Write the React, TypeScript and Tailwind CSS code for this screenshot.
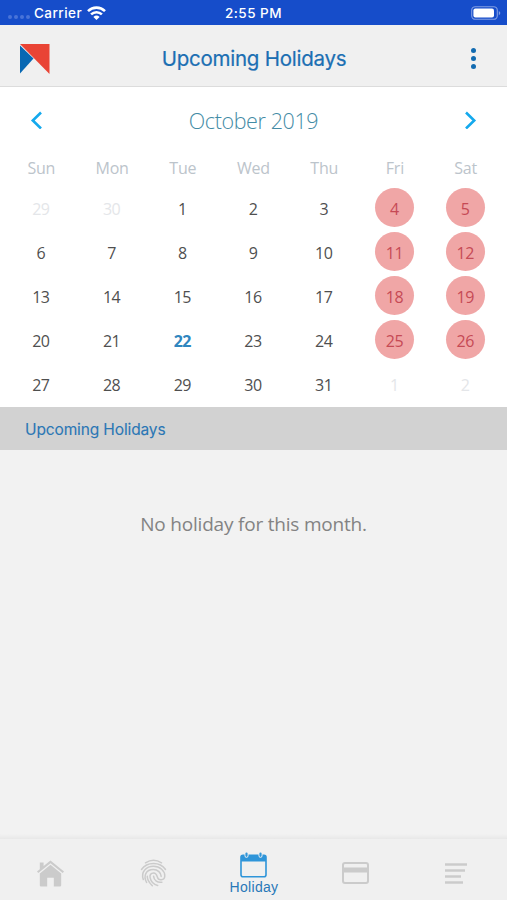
import React from "react";

const WEEKDAYS = ["Sun", "Mon", "Tue", "Wed", "Thu", "Fri", "Sat"];

type Day = { date: number; kind: "normal" | "outside" | "today" | "weekend" };

const TODAY = 22;

// October 2019 starts on a Tuesday, so the grid begins on September 29
const DAYS: Day[] = Array.from({ length: 35 }, (_, i) => {
  if (i < 2) return { date: 29 + i, kind: "outside" };
  const date = i - 1;
  if (date > 31) return { date: date - 31, kind: "outside" };
  if (date === TODAY) return { date, kind: "today" };
  return { date, kind: i % 7 >= 5 ? "weekend" : "normal" };
});

const dayStyles: Record<Day["kind"], string> = {
  normal: "text-[#4f4f4f]",
  outside: "text-[#e4e6e9]",
  today: "font-bold text-[#2f86bf]",
  weekend: "bg-[#f0a6a6] text-[#c64a55]",
};

const StatusBar: React.FC = () => (
  <div className="grid h-[25px] shrink-0 grid-cols-3 items-center bg-[#164dca] pt-px font-['Inter',sans-serif] text-[13.5px] font-medium text-white">
    <div className="flex items-center pl-2">
      <div className="flex gap-[2.5px] pt-[8px]">
        {[0, 1, 2, 3].map((dot) => (
          <span key={dot} className="size-[3.5px] rounded-full bg-[#4973d8]" />
        ))}
      </div>
      <span className="ml-[4.5px] w-[49px] whitespace-nowrap tracking-[0.45px]">Carrier</span>
      <svg className="ml-[4px] h-[14px] w-[19px]" viewBox="0 0 19 14" fill="none" stroke="white" strokeWidth="2.6">
        <path d="M1 5.1a12.2 12.2 0 0 1 17 0" />
        <path d="M4.1 8.4a7.8 7.8 0 0 1 10.8 0" />
        <path d="M9.5 14 6.4 10.9a4.5 4.5 0 0 1 6.2 0z" fill="white" stroke="none" />
      </svg>
    </div>
    <span className="text-center tracking-[0.5px]">2:55 PM</span>
    <svg className="mr-[5px] h-[14px] w-[31px] justify-self-end" viewBox="0 0 31 14" fill="none">
      <rect x="0.7" y="0.7" width="25.6" height="12.6" rx="3.6" stroke="#829ee3" strokeWidth="1.1" />
      <rect x="2.4" y="2.4" width="20.6" height="9.2" rx="2" fill="white" />
      <path d="M27.8 5v4.2c2-.8 2-3.4 0-4.2z" fill="#829ee3" />
    </svg>
  </div>
);

const Header: React.FC = () => (
  <header className="grid h-[62px] shrink-0 grid-cols-[1fr_auto_1fr] items-center border-b border-[#dcdcdc] bg-[#f0f0f0] px-[30px]">
    <svg className="mt-[7px] -ml-[11px] h-8 w-8" viewBox="0 0 32 32">
      <path d="M1 1h29.5v30z" fill="#e94435" />
      <path d="M1 2.5 14.5 15.5 1 30.5z" fill="#0868b3" />
    </svg>
    <h1 className="pt-[7px] pl-px font-['Inter',sans-serif] text-[20.5px] font-normal tracking-[-0.25px] text-[#1c6fb3] [-webkit-text-stroke:0.2px_#1c6fb3]">
      Upcoming Holidays
    </h1>
    <div className="flex w-[8px] flex-col items-center gap-[2.6px] justify-self-end pt-[6px]">
      <span className="size-[5px] rounded-full bg-[#126bb1]" />
      <span className="size-[5px] rounded-full bg-[#126bb1]" />
      <span className="size-[5px] rounded-full bg-[#126bb1]" />
    </div>
  </header>
);

const Calendar: React.FC = () => (
  <section className="h-[320px] shrink-0 bg-white px-[6px] font-['Open_Sans',sans-serif]">
    <div className="flex h-[67px] items-center justify-between px-6">
      <svg className="-mt-[2px] h-[18px] w-[13px]" viewBox="0 0 13 18" fill="none" stroke="#14a9ed" strokeWidth="2.6">
        <path d="M11 1.5 2.8 9.5 11 17.5" />
      </svg>
      <h2 className="pt-px text-[21.5px] font-light tracking-[-0.4px] text-[#438ba5]">October 2019</h2>
      <svg className="-mt-[2px] h-[18px] w-[13px]" viewBox="0 0 13 18" fill="none" stroke="#14a9ed" strokeWidth="2.6">
        <path d="M2 1.5 10.2 9.5 2 17.5" />
      </svg>
    </div>
    <div className="grid h-[32px] grid-cols-7 items-center text-center text-[16px] tracking-[-0.2px] text-[#bcc4cb]">
      {WEEKDAYS.map((name) => (
        <span key={name} className="pb-[4px]">{name}</span>
      ))}
    </div>
    <div className="grid auto-rows-[44px] grid-cols-7 items-center justify-items-center text-[16px] tracking-[-0.5px]">
      {DAYS.map((day, i) => (
        <span
          key={i}
          className={`-mt-px flex size-[39px] items-center justify-center rounded-full pt-[3px] pr-px ${dayStyles[day.kind]}`}
        >
          {day.date}
        </span>
      ))}
    </div>
  </section>
);

// Inactive tabs only show their icon
const TabBar: React.FC = () => (
  <nav className="grid h-[61px] shrink-0 grid-cols-5 bg-[#f0f0f0] text-[#cbcbcb]">
    <div className="flex justify-center pt-[20px]">
      <svg className="h-[28px] w-[27px]" viewBox="0 0 27 28" fill="currentColor">
        <path d="M13.5 1.5 27 12.5l-1.3 1.5L13.5 4.2 1.3 14 0 12.5 2.8 10.2V3.5h3.8v3.6z" />
        <path d="M13.5 5.8 24.2 14.5v11.8q0 1.2-1.2 1.2h-6.2v-8.7h-6.6v8.7H4q-1.2 0-1.2-1.2V14.5z" />
      </svg>
    </div>
    <div className="flex justify-center pt-[20px] pl-[2px]">
      <svg className="h-[28px] w-[27px]" viewBox="0 0 27 28" fill="none" stroke="currentColor" strokeWidth="1.5" strokeLinecap="round">
        <path d="M5.5 3.8C10.5.6 16.5.6 21.5 3.8" />
        <path d="M1.5 10.5C7 2.6 20 2.6 25.5 10.5" />
        <path d="M3.3 20.5C.5 12.5 6.5 7.3 13.5 7.3c6.5 0 11.5 4.7 11.3 9.7-.2 4.6-6.5 5.2-7.5.9-.7-2.7-1.5-4-3.8-4-2.6 0-4 2-3.4 4.8.8 4 3.5 6.8 7.6 7.7" />
        <path d="M6.6 23.5c-3.5-6.5-.8-12.9 6.7-12.9 4.6 0 7.700 3 7.900 6.800" />
        <path d="M12.3 26.8c-3.6-3.5-5.3-6.8-5-9.6" />
        <path d="M13.6 17.3c.3 4.5 4 6.6 8.3 5.9" />
      </svg>
    </div>
    <div className="flex flex-col items-center pt-[13px] text-[#2f95d9]">
      <svg className="h-[26px] w-[27px]" viewBox="0 0 27 26" fill="none">
        <rect x="1" y="3.3" width="25" height="21.5" rx="2" stroke="currentColor" strokeWidth="1.6" />
        <path d="M1 9.5V5q0-1.7 1.8-1.7h21.4Q26 3.3 26 5v4.5z" fill="currentColor" />
        <path d="M6.5 1.5v2.3M20.5 1.5v2.3" stroke="#f0f0f0" strokeWidth="4" strokeLinecap="round" />
        <path d="M6.5 1.5v2.3M20.5 1.5v2.3" stroke="currentColor" strokeWidth="2.2" strokeLinecap="round" />
      </svg>
      <span className="pl-px font-['Liberation_Sans',Arial,sans-serif] text-[14px] leading-[18px] tracking-[0.3px] text-[#2878b8]">
        Holiday
      </span>
    </div>
    <div className="flex justify-center pt-[23px] pl-[2px]">
      <svg className="h-[22px] w-[27px]" viewBox="0 0 27 22" fill="none" stroke="currentColor">
        <rect x="1" y="1" width="25" height="20" rx="2" strokeWidth="2" />
        <path d="M1 8h25" strokeWidth="5" />
      </svg>
    </div>
    <div className="flex justify-center pt-[23px]">
      <svg className="h-[23px] w-[22px]" viewBox="0 0 22 23" fill="none" stroke="currentColor" strokeWidth="2.6">
        <path d="M0 2.5h22M0 8.5h20M0 14.5h16M0 20.5h18" />
      </svg>
    </div>
  </nav>
);

export default function App() {
  return (
    <div className="flex h-[900px] w-[507px] flex-col overflow-hidden bg-[#f2f2f2]">
      <StatusBar />
      <Header />
      <Calendar />
      <div className="flex h-[43px] shrink-0 items-center bg-[#d2d2d2] pt-[2px] pl-[25px] font-['Inter',sans-serif] text-[15.5px] font-normal tracking-[-0.13px] text-[#2b77b5] [-webkit-text-stroke:0.1px_#2b77b5]">
        Upcoming Holidays
      </div>
      <main className="flex-1 pt-[60px] text-center font-['Open_Sans',sans-serif] text-[19px] tracking-[-0.2px] text-[#838383]">
        No holiday for this month.
      </main>
      <div className="h-[5px] shrink-0 bg-linear-to-b from-[#f2f2f2] to-[#e8e8e8]" />
      <TabBar />
    </div>
  );
}
